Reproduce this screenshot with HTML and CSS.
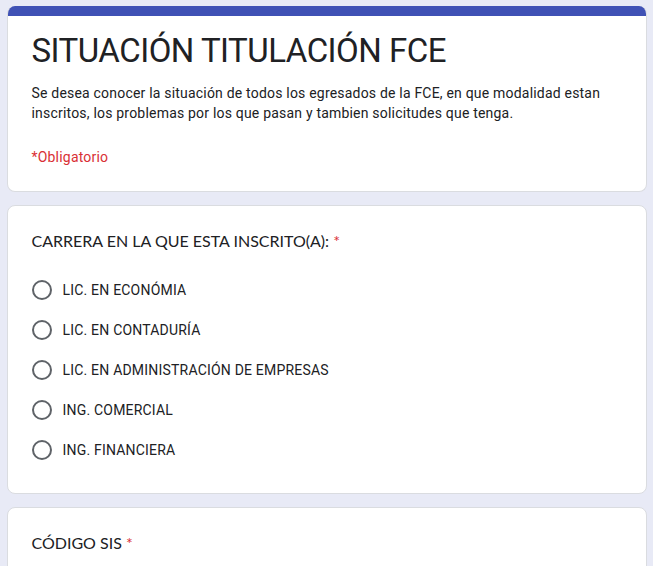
FILE: index.html
```html
<!DOCTYPE html>
<html lang="es">
<head>
    <meta charset="UTF-8">
    <meta name="viewport" content="width=device-width, initial-scale=1.0">
    <title>SITUACIÓN TITULACIÓN FCE</title>
    <link rel="stylesheet" href="styles.css">
</head>
<body>
    <div class="container">
        <div class="card card-header">
            <div class="card-bar"></div>
            <div class="card-body">
                <h1 class="form-title">SITUACIÓN TITULACIÓN FCE</h1>
                <p class="form-description">Se desea conocer la situación de todos los egresados de la FCE, en que modalidad estan inscritos, los problemas por los que pasan y tambien solicitudes que tenga.</p>
                <p class="form-required">*Obligatorio</p>
            </div>
        </div>

        <div class="card">
            <div class="card-body">
                <div class="question-title">CARRERA EN LA QUE ESTA INSCRITO(A): <span class="asterisk">*</span></div>
                <div class="options">
                    <label class="option"><span class="radio"></span><span class="option-label">LIC. EN ECONÓMIA</span></label>
                    <label class="option"><span class="radio"></span><span class="option-label">LIC. EN CONTADURÍA</span></label>
                    <label class="option"><span class="radio"></span><span class="option-label">LIC. EN ADMINISTRACIÓN DE EMPRESAS</span></label>
                    <label class="option"><span class="radio"></span><span class="option-label">ING. COMERCIAL</span></label>
                    <label class="option"><span class="radio"></span><span class="option-label">ING. FINANCIERA</span></label>
                </div>
            </div>
        </div>

        <div class="card">
            <div class="card-body">
                <div class="question-title">CÓDIGO SIS <span class="asterisk">*</span></div>
                <div class="text-answer">Tu respuesta</div>
            </div>
        </div>
    </div>
</body>
</html>
```

FILE: styles.css
```css
* {
    margin: 0;
    padding: 0;
    box-sizing: border-box;
}

body {
    background-color: #e8eaf6;
    font-family: Roboto, Arial, sans-serif;
    color: #202124;
}

.container {
    width: 640px;
    margin: 6px auto 0;
    display: flex;
    flex-direction: column;
    gap: 13px;
}

.card {
    background-color: white;
    border: 1px solid #dadce0;
    border-radius: 8px;
    overflow: hidden;
}

.card-header {
    border-top: none;
}

.card-bar {
    height: 10px;
    background-color: #3f51b5;
}

.card-body {
    padding: 23px 24px 23px;
}

.card-header .card-body {
    padding-top: 15px;
    padding-bottom: 24px;
}

.form-title {
    font-family: Roboto, Arial, sans-serif;
    font-weight: 400;
    font-size: 33px;
    line-height: 40px;
    letter-spacing: -0.5px;
    color: #202124;
}

.form-description {
    margin-top: 12px;
    font-size: 14px;
    line-height: 20px;
    letter-spacing: 0.2px;
}

.form-required {
    margin-top: 24px;
    font-size: 14px;
    line-height: 20px;
    letter-spacing: 0.2px;
    color: #d93035;
}

.question-title {
    font-family: Lato, "Open Sans", sans-serif;
    font-size: 16px;
    line-height: 24px;
}

.asterisk {
    color: #d93035;
}

.options {
    margin-top: 17px;
    display: flex;
    flex-direction: column;
}

.option {
    display: flex;
    align-items: center;
    gap: 11px;
    height: 40px;
}

.radio {
    width: 20px;
    height: 20px;
    border: 2px solid #5f6368;
    border-radius: 50%;
}

.option-label {
    font-size: 14px;
    letter-spacing: 0.2px;
}

.text-answer {
    margin-top: 24px;
    width: 50%;
    padding-bottom: 6px;
    border-bottom: 1px solid #dadce0;
    font-size: 14px;
    color: #70757a;
}
```
